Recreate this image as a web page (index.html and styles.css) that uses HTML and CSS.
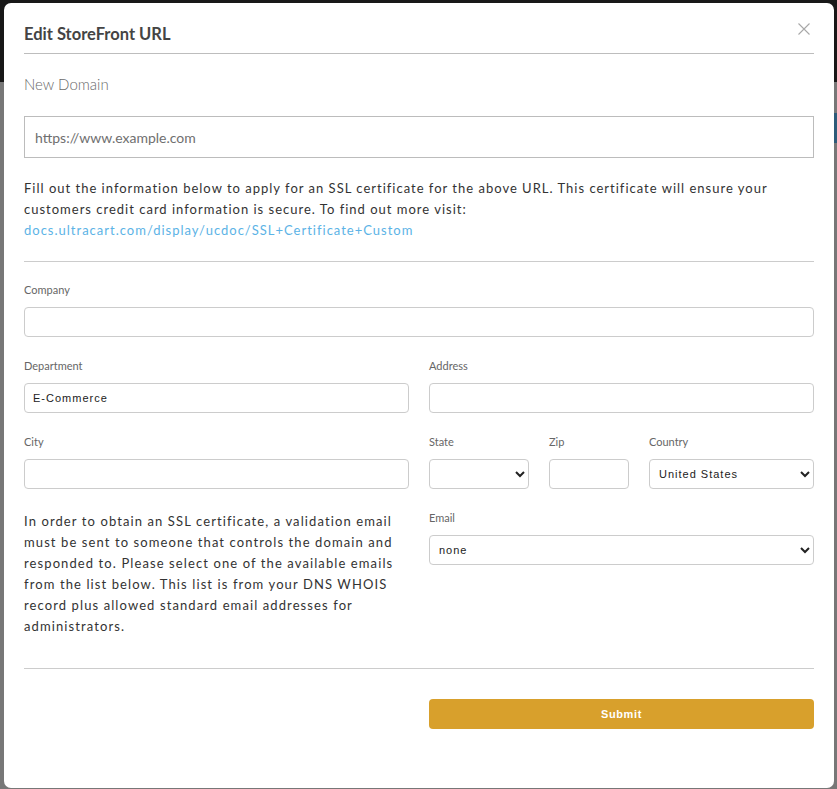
FILE: index.html
```html
<!DOCTYPE html>
<html lang="en">
<head>
    <meta charset="UTF-8">
    <meta name="viewport" content="width=device-width, initial-scale=1.0">
    <title>Edit StoreFront URL</title>
    <link rel="stylesheet" href="styles.css">
</head>
<body>
    <div class="page">
        <div class="topbar"></div>
        <div class="page-body">
            <div class="tab-edge"></div>
        </div>
    </div>

    <div class="modal">
        <div class="modal-header">
            <h2>Edit StoreFront URL</h2>
            <button class="close" aria-label="Close">
                <svg width="12" height="12" viewBox="0 0 12 12"><path d="M0.5 0.5 L11.5 11.5 M11.5 0.5 L0.5 11.5" stroke="#a8a8a8" stroke-width="1.1" fill="none"/></svg>
            </button>
        </div>

        <div class="modal-body">
            <label class="domain-label" for="domain">New Domain</label>
            <input type="text" id="domain" class="domain-input" placeholder="https://www.example.com">

            <p class="intro">
                Fill out the information below to apply for an SSL certificate for the above URL. This certificate will ensure your
                customers credit card information is secure. To find out more visit:<br>
                <a href="#">docs.ultracart.com/display/ucdoc/SSL+Certificate+Custom</a>
            </p>

            <hr>

            <div class="field">
                <label for="company">Company</label>
                <input type="text" id="company">
            </div>

            <div class="row">
                <div class="field">
                    <label for="department">Department</label>
                    <input type="text" id="department" value="E-Commerce">
                </div>
                <div class="field">
                    <label for="address">Address</label>
                    <input type="text" id="address">
                </div>
            </div>

            <div class="row">
                <div class="field">
                    <label for="city">City</label>
                    <input type="text" id="city">
                </div>
                <div class="row-place">
                    <div class="field">
                        <label for="state">State</label>
                        <select id="state"><option></option></select>
                    </div>
                    <div class="field">
                        <label for="zip">Zip</label>
                        <input type="text" id="zip">
                    </div>
                    <div class="field">
                        <label for="country">Country</label>
                        <select id="country"><option>United States</option></select>
                    </div>
                </div>
            </div>

            <div class="row">
                <p class="note">In order to obtain an SSL certificate, a validation email must be sent to someone that controls the domain and responded to. Please select one of the available emails from the list below. This list is from your DNS WHOIS record plus allowed standard email addresses for administrators.</p>
                <div class="field">
                    <label for="email">Email</label>
                    <select id="email"><option>none</option></select>
                </div>
            </div>

            <hr class="footer-rule">

            <div class="row submit-row">
                <div></div>
                <button class="submit">Submit</button>
            </div>
        </div>
    </div>
</body>
</html>
```

FILE: styles.css
```css
body {
    margin: 0;
    font-family: Lato, "Open Sans", sans-serif;
    background-color: #767676;
}
.page {
    height: 789px;
    overflow: hidden;
}
.topbar {
    height: 82px;
    background-color: #181818;
}
.page-body {
    position: relative;
    height: 707px;
    background-color: #777;
}
.tab-edge {
    position: absolute;
    right: 0;
    top: 31px;
    width: 6px;
    height: 30px;
    background-color: #2d5b79;
}
.modal {
    position: absolute;
    top: 3px;
    left: 4px;
    width: 830px;
    height: 785px;
    background: #fff;
    border-radius: 7px;
    box-sizing: border-box;
    padding: 0 20px 0 20px;
}
.modal-header {
    position: relative;
    display: flex;
    align-items: center;
    height: 50px;
    border-bottom: 1px solid #bdbdbd;
}
.modal-header h2 {
    margin: 0;
    padding-top: 12px;
    font-size: 16.5px;
    font-weight: 700;
    color: #444;
}
.close {
    position: absolute;
    right: 4px;
    top: 20px;
    padding: 0;
    border: none;
    background: none;
    cursor: pointer;
    line-height: 0;
}
.modal-body {
    padding-top: 21px;
}
.domain-label {
    display: block;
    font-size: 15px;
    font-weight: 300;
    color: #6a6a6a;
    height: 20px;
    margin-bottom: 21px;
}
.domain-input {
    display: block;
    width: 100%;
    box-sizing: border-box;
    height: 42px;
    padding: 0 10px;
    border: 1px solid #bcbcbc;
    border-radius: 0;
    font-family: Lato, sans-serif;
    font-size: 14px;
    color: #444;
    outline: none;
}
.domain-input::placeholder {
    color: #6f6f6f;
}
.intro {
    margin: 20px 0 0;
    font-size: 13px;
    line-height: 21px;
    letter-spacing: 1px;
    color: #333;
}
.intro a {
    color: #5cb3e6;
    text-decoration: none;
}
hr {
    margin: 20px 0 0;
    border: none;
    border-top: 1px solid #ccc;
}
.field {
    display: flex;
    flex-direction: column;
    min-width: 0;
}
.modal-body > .field {
    margin-top: 21px;
}
.field label {
    font-size: 11px;
    color: #666;
    height: 15px;
    margin-bottom: 9px;
}
.field input, .field select {
    height: 30px;
    box-sizing: border-box;
    width: 100%;
    border: 1px solid #ccc;
    border-radius: 4px;
    padding: 0 8px;
    font-family: "Liberation Sans", Arial, sans-serif;
    font-size: 11px;
    letter-spacing: 1px;
    color: #222;
    background: #fff;
    outline: none;
}
.field select {
    padding: 0 5px;
}
.row {
    display: grid;
    grid-template-columns: 1fr 1fr;
    gap: 20px;
    margin-top: 22px;
}
.row-place {
    display: grid;
    grid-template-columns: 100px 80px 1fr;
    gap: 20px;
}
.note {
    margin: 0;
    font-size: 13px;
    line-height: 21px;
    letter-spacing: 1.1px;
    color: #333;
}
.footer-rule {
    margin-top: 31px;
}
.submit-row {
    margin-top: 30px;
}
.submit {
    height: 30px;
    border: none;
    border-radius: 4px;
    background-color: #d8a02c;
    color: #fff;
    font-family: "Liberation Sans", Arial, sans-serif;
    font-size: 11px;
    font-weight: 700;
    letter-spacing: 0.6px;
    cursor: pointer;
}
```
